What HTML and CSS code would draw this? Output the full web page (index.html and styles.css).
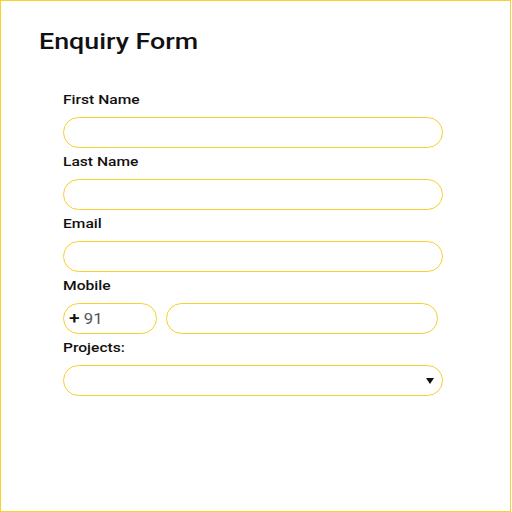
FILE: index.html
```html
<!DOCTYPE html>
<html>
<head>
<meta charset="utf-8">
<link rel="stylesheet" href="styles.css">
</head>
<body>
<div class="page">
  <h1 class="title">Enquiry Form</h1>
  <form class="form">
    <label class="label">First Name</label>
    <input class="field" type="text">
    <label class="label">Last Name</label>
    <input class="field" type="text">
    <label class="label">Email</label>
    <input class="field" type="text">
    <label class="label">Mobile</label>
    <div class="mobile">
      <div class="code"><span class="code-text"><span class="plus">+</span> <span class="digits">91</span></span></div>
      <input class="field number" type="text">
    </div>
    <label class="label">Projects:</label>
    <div class="select-wrap">
      <div class="field select"></div>
      <span class="arrow"></span>
    </div>
  </form>
</div>
</body>
</html>
```
FILE: styles.css
```css
html, body {
  margin: 0;
  padding: 0;
  background: #fff;
}
.page {
  box-sizing: border-box;
  width: 511px;
  height: 512px;
  border: 1px solid #f9d02c;
  padding: 28px 0 0 38px;
  font-family: Roboto, "Liberation Sans", sans-serif;
  color: #111;
}
.title {
  width: fit-content;
  margin: 0;
  font-size: 22px;
  font-weight: 500;
  line-height: 26px;
  transform: scaleX(1.22);
  transform-origin: left center;
}
.form {
  display: flex;
  flex-direction: column;
  align-items: flex-start;
  margin: 37px 0 0 24px;
  width: 380px;
}
.label {
  display: block;
  font-size: 13px;
  font-weight: 500;
  line-height: 16px;
  margin-bottom: 9px;
  transform: scaleX(1.2);
  transform-origin: left center;
}
.field {
  box-sizing: border-box;
  display: block;
  width: 380px;
  height: 31px;
  border: 1.5px solid #f8cf2c;
  border-radius: 16px;
  background: #fff;
  margin: 0 0 6px 0;
  padding: 0 12px;
  outline: none;
  font-family: inherit;
}
.mobile {
  display: flex;
  gap: 9px;
  margin-bottom: 6px;
}
.code {
  box-sizing: border-box;
  width: 94px;
  height: 31px;
  border: 1.5px solid #f8cf2c;
  border-radius: 16px;
  display: flex;
  align-items: center;
  padding-left: 5px;
}
.code-text {
  display: inline-block;
  font-size: 14px;
  line-height: 16px;
  transform: scaleX(1.2);
  transform-origin: left center;
  white-space: pre;
}
.plus {
  font-weight: 500;
  color: #111;
  font-size: 16px;
}
.digits {
  color: #555;
}
.number {
  width: 272px;
  margin: 0;
}
.select-wrap {
  position: relative;
  width: 380px;
}
.select {
  margin: 0;
}
.arrow {
  position: absolute;
  right: 9px;
  top: 13px;
  width: 0;
  height: 0;
  border-left: 4px solid transparent;
  border-right: 4px solid transparent;
  border-top: 6px solid #111;
}
```
